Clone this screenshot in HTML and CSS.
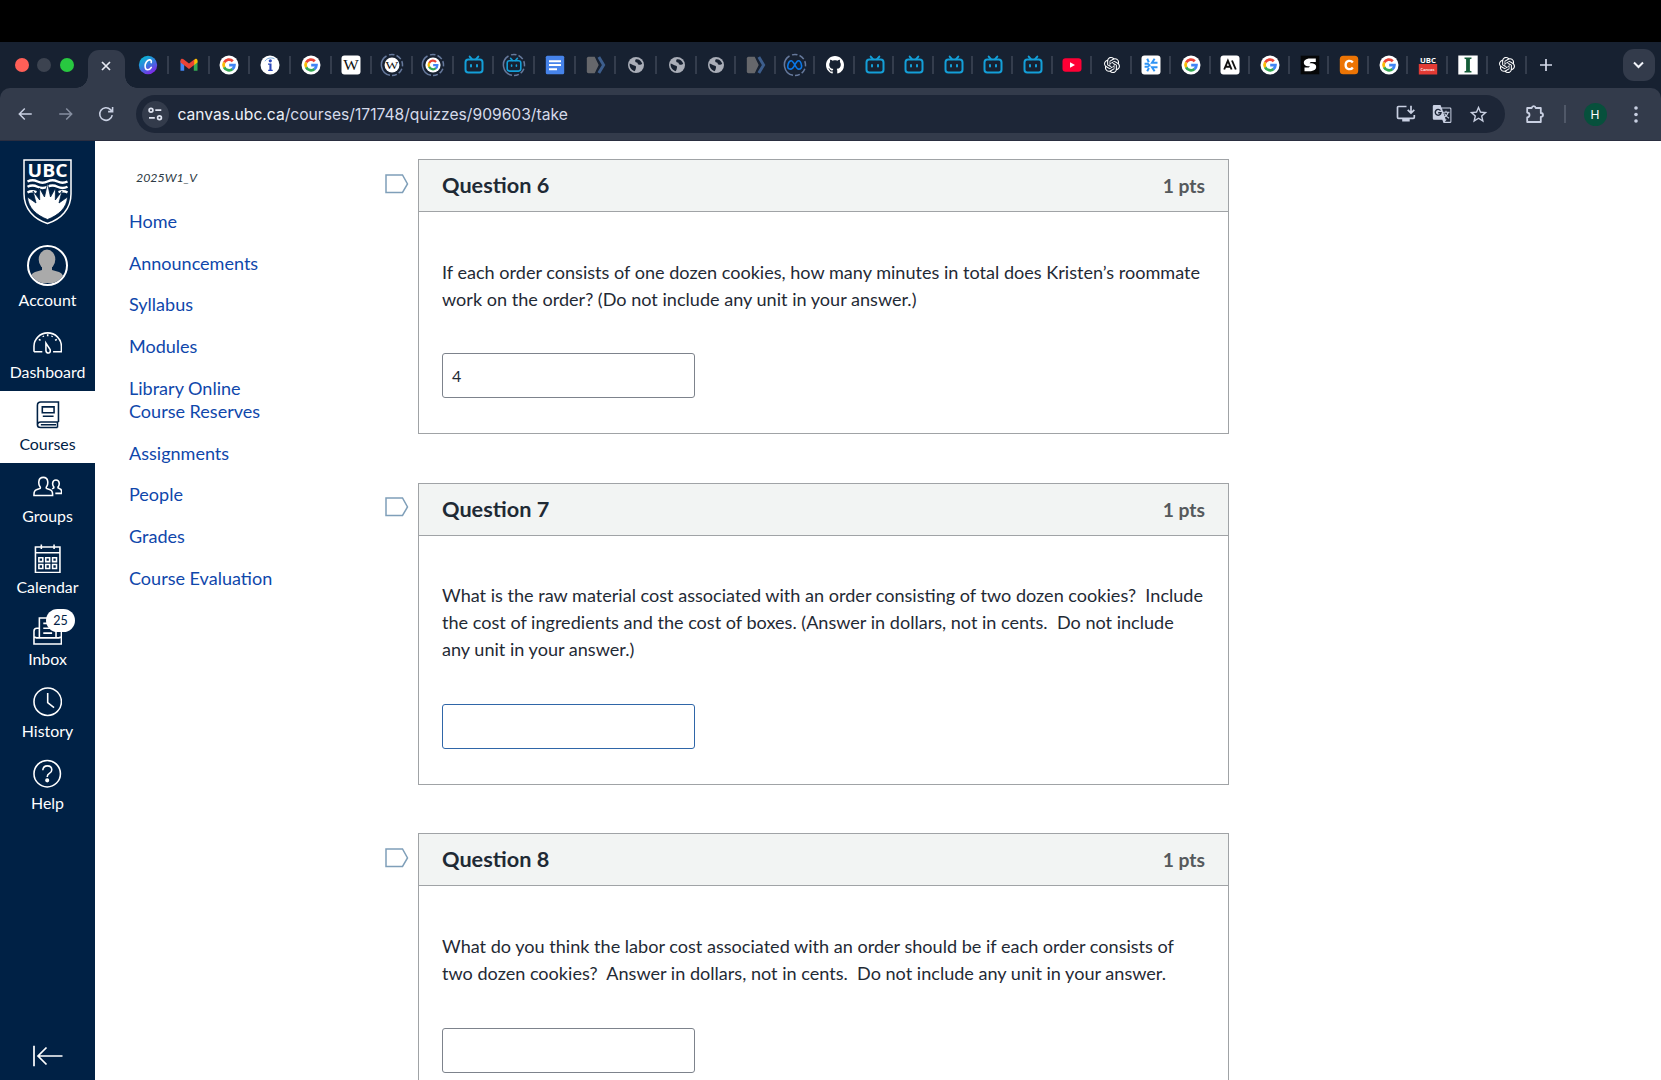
FILE: index.html
```html
<!DOCTYPE html>
<html lang="en">
<head>
<meta charset="utf-8">
<title>Quiz</title>
<link rel="stylesheet" href="styles.css">
</head>
<body>
<svg class="sprite" aria-hidden="true">
  <symbol id="ring" viewBox="0 0 24 24"><g fill="none" stroke="#66799c" stroke-width="1.500"><path d="M10 22.300A10.500 10.500 0 0 1 6.500 3"/><path d="M9 1.900a10.500 10.500 0 0 1 13.500 10.100A10.500 10.500 0 0 1 12 22.500" stroke-dasharray="5.500 2.200"/></g></symbol>
  <symbol id="gmail" viewBox="0 0 20 20">
    <path d="M1.500 5.500v10.300h3.700V8.500z" fill="#4285f4"/><path d="M18.500 5.500v10.300h-3.700V8.500z" fill="#34a853"/>
    <path d="M14.800 5.600v4.700l3.700-2.800V5.600c0-1.700-2-2.300-3-1.200z" fill="#fbbc04"/>
    <path d="M1.500 5.600c0-1.800 2-2.300 3-1.300l5.500 4.200 5.200-4v5.500L10 13.900 5.200 10.300 1.500 7.500z" fill="#ea4335"/>
  </symbol>
  <symbol id="google" viewBox="0 0 20 20">
    <circle cx="10" cy="10" r="9.500" fill="#fff"/>
    <g fill="none" stroke-width="2.800">
      <path d="M5.200 7.500A5.300 5.300 0 0 1 13.800 6.200" stroke="#ea4335"/>
      <path d="M5.300 12.500a5.300 5.300 0 0 1-.1-5.200" stroke="#fbbc05"/>
      <path d="M13.600 13.900a5.300 5.300 0 0 1-8.400-1.600" stroke="#34a853"/>
      <path d="M10.200 10.200h5.200a5.300 5.300 0 0 1-2 4" stroke="#4285f4"/>
    </g>
  </symbol>
  <symbol id="info" viewBox="0 0 20 20">
    <circle cx="10" cy="10" r="9.500" fill="#fff"/><circle cx="10.300" cy="5.800" r="1.600" fill="#2a47b8"/>
    <path d="M8 8.500h3.500v6.300h1.200v1.300H8.200v-1.300h1.200V9.800H8z" fill="#2a47b8"/><path d="M5 6.200C6.500 3.200 11 2 14.500 3.800" fill="none" stroke="#70a3d8"/>
  </symbol>
  <symbol id="wiki" viewBox="0 0 20 20"><rect x=".5" y=".5" width="19" height="19" rx="3" fill="#fff"/><text x="10" y="15" class="serif" font-size="14.500" text-anchor="middle" textLength="15.500" lengthAdjust="spacingAndGlyphs">W</text></symbol>
  <symbol id="wikiround" viewBox="0 0 20 20"><circle cx="10" cy="10" r="9.300" fill="#fff"/><text x="10" y="14.800" class="serif" font-size="14" text-anchor="middle" textLength="16" lengthAdjust="spacingAndGlyphs">W</text></symbol>
  <symbol id="bili" viewBox="0 0 20 20"><g fill="none" stroke="#149fd8" stroke-width="2" stroke-linecap="round"><rect x="1.500" y="4.600" width="17" height="13" rx="2.800"/><path d="M5.700 1.600l2.200 2.600M14.300 1.600l-2.200 2.600M7 10v1.500M13 10v1.500"/></g></symbol>
  <symbol id="docs" viewBox="0 0 20 20"><rect x=".8" y=".8" width="18.400" height="18.400" rx="1.500" fill="#4683ea"/><path d="M4 6.200h12M4 10h12M4 14.200h8" stroke="#fff" stroke-width="2"/></symbol>
  <symbol id="fwd2" viewBox="0 0 20 20"><path d="M2.500 1.800h6.200l4 8.200-4 8.200H2.500q-1.700 0-1.700-1.700v-13q0-1.700 1.700-1.700z" fill="#66676b"/><path d="M12.800 2l4.800 8-4.800 8" fill="none" stroke="#3c5d8c" stroke-width="3"/></symbol>
  <symbol id="globe" viewBox="0 0 20 20"><circle cx="10" cy="10" r="8" fill="#a9adb7"/><path d="M3.700 8.600c2 .3 2.600 1.800 4.400 1.800 1.500 0 2.300 1 1.900 2.200-.3 1-.1 1.900-1.300 3.600C5.500 15.500 3 12 3.700 8.600zM9.600 4.400c2.800-.7 5.800 1.400 6.600 4.300-1.200.8-2 1.500-3.700.9-1.100-.4-.4-1.900-1.800-2.100-1.400-.1-2.100-1.900-1.100-3.100z" fill="#172131"/></symbol>
  <symbol id="meta" viewBox="0 0 20 20"><path d="M2 14.600C-.2 13 1.500 4.600 5.200 4.600c3.600 0 5.600 10.600 9.400 10.600 2.500 0 4-1.500 3.600-4.500-.5-3.600-1.800-6.100-3.900-6.100-3.600 0-5.200 10.600-9.300 10.600-1.500 0-2.500-.2-3-.6z" fill="none" stroke="#0a78e8" stroke-width="2"/></symbol>
  <symbol id="github" viewBox="0 0 16 16"><path fill="#fff" d="M8 0C3.580 0 0 3.580 0 8c0 3.540 2.290 6.530 5.470 7.590.4.070.55-.17.55-.38 0-.19-.01-.82-.01-1.490-2.010.37-2.530-.49-2.690-.94-.09-.23-.48-.94-.82-1.130-.28-.15-.68-.52-.01-.53.63-.01 1.080.58 1.230.82.720 1.210 1.870.870 2.330.660.070-.52.280-.87.510-1.070-1.780-.2-3.640-.89-3.640-3.950 0-.87.310-1.590.820-2.150-.08-.2-.36-1.020.080-2.120 0 0 .670-.21 2.200.820.640-.18 1.320-.27 2-.27s1.360.090 2 .270c1.530-1.040 2.200-.82 2.200-.82.440 1.100.160 1.920.080 2.120.510.560.820 1.270.820 2.150 0 3.070-1.870 3.750-3.650 3.950.290.250.540.730.540 1.480 0 1.070-.01 1.930-.01 2.200 0 .210.150.460.550.380A8.010 8.010 0 0 0 16 8c0-4.420-3.580-8-8-8z"/></symbol>
  <symbol id="youtube" viewBox="0 0 20 20"><rect x=".5" y="3.300" width="19" height="13.500" rx="3.200" fill="#ff0035"/><path d="M8 7.200v5.600l5-2.800z" fill="#fff"/></symbol>
  <symbol id="openai" viewBox="-3 -3 30 30"><path fill="#fff" d="M22.2819 9.8211a5.9847 5.9847 0 0 0-.5157-4.9108 6.0462 6.0462 0 0 0-6.5098-2.9A6.0651 6.0651 0 0 0 4.9807 4.1818a5.9847 5.9847 0 0 0-3.9977 2.9 6.0462 6.0462 0 0 0 .7427 7.0966 5.98 5.98 0 0 0 .511 4.9107 6.051 6.051 0 0 0 6.5146 2.9001A5.9847 5.9847 0 0 0 13.2599 24a6.0557 6.0557 0 0 0 5.7718-4.2058 5.9894 5.9894 0 0 0 3.9977-2.9001 6.0557 6.0557 0 0 0-.7475-7.0729zm-9.022 12.6081a4.4755 4.4755 0 0 1-2.8764-1.0408l.1419-.0804 4.7783-2.7582a.7948.7948 0 0 0 .3927-.6813v-6.7369l2.02 1.1686a.071.071 0 0 1 .038.052v5.5826a4.504 4.504 0 0 1-4.4945 4.4944zm-9.6607-4.1254a4.4708 4.4708 0 0 1-.5346-3.0137l.142.0852 4.783 2.7582a.7712.7712 0 0 0 .7806 0l5.8428-3.3685v2.3324a.0804.0804 0 0 1-.0332.0615L9.74 19.9502a4.4992 4.4992 0 0 1-6.1408-1.6464zM2.3408 7.8956a4.485 4.485 0 0 1 2.3655-1.9728V11.6a.7664.7664 0 0 0 .3879.6765l5.8144 3.3543-2.0201 1.1685a.0757.0757 0 0 1-.071 0l-4.8303-2.7865A4.504 4.504 0 0 1 2.3408 7.872zm16.5963 3.8558L13.1038 8.364 15.1192 7.2a.0757.0757 0 0 1 .071 0l4.8303 2.7913a4.4944 4.4944 0 0 1-.6765 8.1042v-5.6772a.79.79 0 0 0-.407-.667zm2.0107-3.0231l-.142-.0852-4.7735-2.7818a.7759.7759 0 0 0-.7854 0L9.409 9.2297V6.8974a.0662.0662 0 0 1 .0284-.0615l4.8303-2.7866a4.4992 4.4992 0 0 1 6.6802 4.66zM8.3065 12.863l-2.02-1.1638a.0804.0804 0 0 1-.038-.0567V6.0742a4.4992 4.4992 0 0 1 7.3757-3.4537l-.142.0805L8.704 5.459a.7948.7948 0 0 0-.3927.6813zm1.0976-2.3654l2.602-1.4998 2.6069 1.4998v2.9994l-2.5974 1.4997-2.6067-1.4997Z"/></symbol>
  <symbol id="spark" viewBox="0 0 20 20"><rect x=".5" y=".5" width="19" height="19" rx="3" fill="#fff"/><g fill="none" stroke="#2f94f5" stroke-width="2"><path d="M6.200 3.800l1.600 3.400M3.600 8.700h3.200l1.600 1.600-1.600 1.500H3.600M6.200 16.300l1.700-3.300M13.600 3.800l-2.600 4h5.500M16.500 12.300H11l2.600 4"/></g></symbol>
  <symbol id="anthropic" viewBox="0 0 20 20"><rect x=".5" y=".5" width="19" height="19" rx="3" fill="#fff"/><path d="M4.200 14.500L7.900 5.600l3.700 8.900M5.500 11.700h4.700M12 5.500l3.800 9" fill="none" stroke="#111" stroke-width="1.900"/></symbol>
  <symbol id="sblack" viewBox="0 0 20 20"><rect x=".7" y=".7" width="18.600" height="18.600" fill="#060708"/><path d="M15.800 3.500H8.500Q3.500 4.500 3.800 8q.4 3 4.200 3.200h2l-1.300 1.300H4.500v3.700h6.500q5.200-.9 5.200-4.200 0-3.200-4.200-3.800H9.500l1.300-1.300h5z" fill="#fff"/></symbol>
  <symbol id="corange" viewBox="0 0 20 20"><rect x=".8" y=".8" width="18.400" height="18.400" rx="3.500" fill="#ec7404"/><path d="M13.800 7.500C12 4.800 6.600 5.200 6.600 10s5.400 5.200 7.200 2.500" fill="none" stroke="#fff" stroke-width="2.300"/></symbol>
  <symbol id="ubcfav" viewBox="0 0 20 20"><rect x=".8" y="9" width="18.400" height="10.500" fill="#e23a34"/><text x="10" y="7.500" fill="#fff" class="sans" font-weight="700" font-size="7" text-anchor="middle" textLength="16" lengthAdjust="spacingAndGlyphs">UBC</text><text x="9.500" y="15.500" fill="#fff" class="sans" font-weight="600" font-size="4" text-anchor="middle">Canvas</text></symbol>
  <symbol id="inst" viewBox="0 0 20 20"><rect x=".3" y=".5" width="19.400" height="19" fill="#fff"/><path d="M6.500 2.500h7v1.300l-1.600.5v11.400l1.600.5v1.300h-7v-1.300l1.600-.5V4.300l-1.600-.5z" fill="#145c38"/></symbol>
</svg>

<div class="topgap"></div>
<header class="tabstrip">
  <div class="lights"><i class="red"></i><i class="gray"></i><i class="green"></i></div>
  <div class="active-tab">
    <svg width="10" height="10" viewBox="0 0 10 10"><path d="M1 1l8 8M9 1L1 9" stroke="#e6e9f2" stroke-width="1.700"/></svg>
  </div>
  <div class="tabs">
    <span class="tab"><svg viewBox="0 0 20 20">
      <linearGradient id="cg" x1="0" y1="0" x2=".6" y2="1"><stop offset="0" stop-color="#00c4cc"/><stop offset=".5" stop-color="#2b86dc"/><stop offset="1" stop-color="#7d2ae8"/></linearGradient>
      <circle cx="10" cy="10" r="9.200" fill="url(#cg)"/>
      <path d="M13.200 7.600c.5-1.700-.3-2.900-1.800-2.700-2.300.3-4.300 3.300-4.300 6.200 0 2.300 1 3.700 2.700 3.700 1.500 0 2.700-1 3.500-2.400" fill="none" stroke="#fff" stroke-width="1.600" stroke-linecap="round"/></svg></span>
    <span class="tab"><svg><use href="#gmail"/></svg></span>
    <span class="tab"><svg><use href="#google"/></svg></span>
    <span class="tab"><svg><use href="#info"/></svg></span>
    <span class="tab"><svg><use href="#google"/></svg></span>
    <span class="tab"><svg><use href="#wiki"/></svg></span>
    <span class="tab asleep"><svg><use href="#wikiround"/></svg><svg class="ring"><use href="#ring"/></svg></span>
    <span class="tab asleep"><svg><use href="#google"/></svg><svg class="ring"><use href="#ring"/></svg></span>
    <span class="tab"><svg><use href="#bili"/></svg></span>
    <span class="tab asleep"><svg><use href="#bili"/></svg><svg class="ring"><use href="#ring"/></svg></span>
    <span class="tab"><svg><use href="#docs"/></svg></span>
    <span class="tab"><svg><use href="#fwd2"/></svg></span>
    <span class="tab"><svg><use href="#globe"/></svg></span>
    <span class="tab narrow"><svg><use href="#globe"/></svg></span>
    <span class="tab narrow"><svg><use href="#globe"/></svg></span>
    <span class="tab narrow"><svg><use href="#fwd2"/></svg></span>
    <span class="tab narrow asleep"><svg><use href="#meta"/></svg><svg class="ring"><use href="#ring"/></svg></span>
    <span class="tab narrow"><svg class="gh"><use href="#github"/></svg></span>
    <span class="tab narrow"><svg><use href="#bili"/></svg></span>
    <span class="tab narrow"><svg><use href="#bili"/></svg></span>
    <span class="tab narrow"><svg><use href="#bili"/></svg></span>
    <span class="tab narrow"><svg><use href="#bili"/></svg></span>
    <span class="tab narrow"><svg><use href="#bili"/></svg></span>
    <span class="tab narrow"><svg><use href="#youtube"/></svg></span>
    <span class="tab narrow"><svg><use href="#openai"/></svg></span>
    <span class="tab narrow"><svg><use href="#spark"/></svg></span>
    <span class="tab narrow"><svg><use href="#google"/></svg></span>
    <span class="tab narrow"><svg><use href="#anthropic"/></svg></span>
    <span class="tab narrow"><svg><use href="#google"/></svg></span>
    <span class="tab narrow"><svg><use href="#sblack"/></svg></span>
    <span class="tab narrow"><svg><use href="#corange"/></svg></span>
    <span class="tab narrow"><svg><use href="#google"/></svg></span>
    <span class="tab narrow"><svg><use href="#ubcfav"/></svg></span>
    <span class="tab narrow"><svg><use href="#inst"/></svg></span>
    <span class="tab narrow"><svg><use href="#openai"/></svg></span>
  </div>
  <svg class="plus" width="12" height="12" viewBox="0 0 12 12"><path d="M6 0v12M0 6h12" stroke="#d5daea" stroke-width="1.700"/></svg>
  <div class="tabsearch"><svg width="11" height="8" viewBox="0 0 11 8"><path d="M1 1.500l4.500 4.500L10 1.500" fill="none" stroke="#f2f4fa" stroke-width="2"/></svg></div>
</header>

<div class="toolbar-back">
<div class="toolbar">
  <div class="nav-buttons">
    <svg viewBox="0 0 24 24" fill="#c9d0e2"><path d="M21 11H6.800l5.600-5.600L11 4l-8 8 8 8 1.400-1.400L6.800 13H21z"/></svg>
    <svg viewBox="0 0 24 24" fill="#878fa1"><path d="M3 11h14.200l-5.600-5.600L13 4l8 8-8 8-1.400-1.400 5.600-5.600H3z"/></svg>
    <svg viewBox="0 0 24 24"><path d="M20.300 13.500a8.400 8.400 0 1 1-2.300-7.400L20 8.500M20.800 2.800v6h-6" fill="none" stroke="#c9d0e2" stroke-width="2.100"/></svg>
  </div>
  <div class="omnibox">
    <span class="site"><svg width="15" height="14" viewBox="0 0 15 14" fill="none" stroke="#dfe4f0" stroke-width="1.700"><circle cx="3" cy="3.200" r="1.900"/><path d="M7.300 3.200h6M1 10.800h5.800"/><circle cx="11.500" cy="10.800" r="1.900"/></svg></span>
    <span class="url"><b>canvas.ubc.ca</b>/courses/171748/quizzes/909603/take</span>
    <span class="omni-icons">
      <svg width="20" height="18" viewBox="0 0 20 18"><path d="M10.500 1.500H2.500q-1 0-1 1v9.800q0 1 1 1h14.800q1 0 1-1V10" fill="none" stroke="#c9d0e2" stroke-width="1.700"/><path d="M6.200 13.500h7.500v3H6.200z" fill="#c9d0e2"/><path d="M15 .8v7M11.700 4.800l3.300 3.300 3.300-3.300" fill="none" stroke="#c9d0e2" stroke-width="1.700"/></svg>
      <svg width="20" height="20" viewBox="0 0 20 20"><path d="M2 1h6.500l1 2.500H18q1.400 0 1.400 1.300v12.900q0 1.300-1.400 1.300h-6.500l-1.200-3.200H2Q.8 15.800.8 14.500V2.300Q.8 1 2 1z" fill="#c9d0e2"/><path d="M10 4.600h7.800q.6 0 .6.600v12q0 .6-.6.600h-5l2-2.200h-1.100z" fill="#1d2637"/><path d="M11 8.200h6.500M14 6.700v1.500M16.200 8.500q-.8 2.800-4 4.800M12.500 9.500q1 2.500 4.500 4.700" fill="none" stroke="#c9d0e2" stroke-width="1.100"/><path d="M8.500 6.600A2.900 2.900 0 1 0 9 8.800H6.200" fill="none" stroke="#1d2637" stroke-width="1.400"/></svg>
      <svg width="21" height="21" viewBox="0 0 24 24" fill="#c9d0e2"><path d="M22 9.240l-7.190-.62L12 2 9.190 8.630 2 9.240l5.460 4.730L5.820 21 12 17.270 18.180 21l-1.630-7.030L22 9.240zM12 15.400l-3.760 2.270 1-4.280-3.320-2.880 4.380-.38L12 6.100l1.710 4.040 4.380.38-3.320 2.880 1 4.280L12 15.400z"/></svg>
    </span>
  </div>
  <svg class="puzzle" width="20" height="20" viewBox="0 0 20 20"><path d="M2.200 4h4.600Q7 2.200 8.700 2.200T10.600 4h5.200v5q2.200.2 2.200 2t-2.200 2v5H2.200v-4.500q2.300-.4 2.300-2.500T2.200 8.500z" fill="none" stroke="#c9d0e2" stroke-width="1.800" stroke-linejoin="round"/></svg>
  <i class="bar"></i>
  <span class="profile">H</span>
  <svg class="dots" width="4" height="17" viewBox="0 0 4 17" fill="#c9d0e2"><circle cx="2" cy="2" r="1.800"/><circle cx="2" cy="8.500" r="1.800"/><circle cx="2" cy="15" r="1.800"/></svg>
</div>
</div>

<div class="page">
  <nav class="global">
    <svg class="crest" width="49" height="66" viewBox="0 0 49 66">
      <path d="M1 1h47v34c0 15-10 25-23.500 29.500C11 60 1 50 1 35z" fill="#002145" stroke="#fff" stroke-width="1.500"/>
      <text x="24.500" y="18.300" class="sans" font-weight="700" font-size="18" fill="#fff" text-anchor="middle" textLength="40" lengthAdjust="spacingAndGlyphs">UBC</text>
      <g fill="none" stroke="#fff" stroke-width="2.400"><path d="M4.500 22.500q5-2.500 10 0t10 0 10 0 10 0M4.500 27.800q5-2.500 10 0t10 0 10 0 10 0"/><path d="M4.500 33.500q4-2.200 9-.3M44.500 33.500q-4-2.200-9-.3"/></g>
      <path d="M24.500 24l3 14 5-9-.2 12 6.700-9-3 12 8.500-6C44 49 35 56.500 24.500 60.500 14 56.500 5 49 4.500 38l8.500 6-3-12 6.700 9-.2-12 5 9z" fill="#fff" stroke="#002145" stroke-width=".8"/>
    </svg>
    <a class="item account"><span class="avatar"><svg width="36" height="36" viewBox="0 0 36 36"><g fill="#aaa"><ellipse cx="18" cy="12.500" rx="8.300" ry="10"/><path d="M13 19h10v4l7 2q5 1.800 6 11H0q1-9.200 6-11l7-2z"/></g></svg></span><b>Account</b></a>
    <a class="item"><svg class="ic" viewBox="0 0 30 30"><path d="M1 24.200v-5.500a14 13.700 0 0 1 28 0v5.500h-8.500M1 24.200h8.500"/><path d="M13.200 15.500l4.300 6.500q.7 3-1.500 3.500-2.400.3-2.800-2.500z"/><path d="M15 6.500v2M6 11.500l1.700 1.200M24.300 11.500l-1.700 1.200M10.300 8l.5 1M19.700 8l-.5 1"/></svg><b>Dashboard</b></a>
    <a class="item current"><svg class="ic" viewBox="0 0 30 30"><path d="M26 22.500V2H8Q4.500 2 4.500 5.500V25.200q0 2.800 3.200 2.800H25M26 22.500H8q-3.300 0-3.300 2.500M25 22.500V28M8 25.300h15.500M9.500 7h12v6h-12zM10 16.500h11"/></svg><b>Courses</b></a>
    <a class="item low"><svg class="ic" viewBox="0 0 30 30"><path d="M1 24q-.2-5 2.500-5.800l3.800-1.400q.6-1.200-.4-2.300-1.300-2-.9-5Q6.500 5.500 10.500 5.500T15 9.500q.4 3-.9 5-1 1.100-.4 2.300l3.800 1.400Q20.200 19 20 24z"/><path d="M19.500 17.200l1.700-.9q.3-.8-.4-1.700-1-1.500-.7-3.500.4-3 3.300-3t3.300 3q.3 2-.7 3.500-.7.900-.4 1.700l2.200 1Q29.500 18 29.300 21.800h-6.500"/></svg><b>Groups</b></a>
    <a class="item low"><svg class="ic" viewBox="0 0 30 30"><path d="M2.500 3h25v26h-25zM2.500 9h25M8.500.5V5M21.500.5V5M6 14h4v4H6zM13 14h4v4h-4zM20 14h4v4h-4zM6 21h4v4H6zM13 21h4v4h-4zM20 21h4v4h-4z"/></svg><b>Calendar</b></a>
    <a class="item low"><svg class="ic" viewBox="0 0 30 30"><path d="M6.500 22V2h17v20M6.500 12.500H4q-3 0-3 3V28.500h28V15q0-2.500-3-2.500h-2.500M1.500 21.500l2 .8h23l2-.8M10.500 7.500h5M10.500 12.500h9M10.500 17.500h9"/></svg><b>Inbox</b><em class="badge">25</em></a>
    <a class="item low"><svg class="ic" viewBox="0 0 30 30"><circle cx="15" cy="15" r="14"/><path d="M15 6v10l6.500 5"/></svg><b>History</b></a>
    <a class="item low"><svg class="ic" viewBox="0 0 30 30"><circle cx="14.500" cy="15" r="13.500"/><path d="M10 11.500q.3-4.500 4.700-4.500t4.500 4q0 2.300-2.500 3.700-2.200 1.300-2.200 3.800"/><circle cx="14.500" cy="21.800" r="1.300" fill="#fff"/></svg><b>Help</b></a>
    <svg class="collapse" width="30" height="22" viewBox="0 0 30 22"><path d="M1 .8v20.400M29.500 11H5.500M13.500 2.500L5 11l8.500 8.500" fill="none" stroke="#fff" stroke-width="1.700"/></svg>
  </nav>
  <aside class="course-nav">
    <span class="term">2025W1_V</span>
    <a>Home</a><a>Announcements</a><a>Syllabus</a><a>Modules</a><a>Library Online Course Reserves</a><a>Assignments</a><a>People</a><a>Grades</a><a>Course Evaluation</a>
  </aside>
  <main class="quiz">
    <section class="row">
      <svg class="flag" width="24" height="20" viewBox="0 0 24 20"><path d="M1 1h16.500l5 9-5 8.500H1z"/></svg>
      <div class="question">
        <h2>Question 6 <span>1 pts</span></h2>
        <div class="body"><p>If each order consists of one dozen cookies, how many minutes in total does Kristen’s roommate<br>work on the order? (Do not include any unit in your answer.)</p><div class="answer">4</div></div>
      </div>
    </section>
    <section class="row">
      <svg class="flag" width="24" height="20" viewBox="0 0 24 20"><path d="M1 1h16.500l5 9-5 8.500H1z"/></svg>
      <div class="question">
        <h2>Question 7 <span>1 pts</span></h2>
        <div class="body"><p>What is the raw material cost associated with an order consisting of two dozen cookies?&nbsp; Include<br>the cost of ingredients and the cost of boxes. (Answer in dollars, not in cents.&nbsp; Do not include<br>any unit in your answer.)</p><div class="answer focused"></div></div>
      </div>
    </section>
    <section class="row">
      <svg class="flag" width="24" height="20" viewBox="0 0 24 20"><path d="M1 1h16.500l5 9-5 8.500H1z"/></svg>
      <div class="question">
        <h2>Question 8 <span>1 pts</span></h2>
        <div class="body"><p>What do you think the labor cost associated with an order should be if each order consists of<br>two dozen cookies?&nbsp; Answer in dollars, not in cents.&nbsp; Do not include any unit in your answer.</p><div class="answer"></div></div>
      </div>
    </section>
  </main>
</div>
</body>
</html>
```
FILE: styles.css
```css
* { box-sizing: border-box; }
body {
  margin: 0;
  width: 1661px;
  height: 1080px;
  overflow: hidden;
  display: flex;
  flex-direction: column;
  background: #fff;
  font-family: Lato, "Liberation Sans", sans-serif;
  color: #1f2a35;
}
svg { display: block; flex: none; }
.sprite { display: none; }
.serif { font-family: "Liberation Serif", serif; fill: #111; }
.sans { font-family: "Open Sans", sans-serif; }

/* Browser frame */
.topgap { height: 42px; flex: none; background: #000; }
.tabstrip {
  height: 46px;
  flex: none;
  display: flex;
  background: #172131;
  align-items: center;
}
.lights { display: flex; gap: 8.500px; width: 88px; padding-left: 14.500px; flex: none; }
.lights i { width: 14px; height: 14px; border-radius: 50%; }
.red { background: #ff5f57; }
.gray { background: #3c4350; }
.green { background: #28c840; }
.active-tab {
  position: relative;
  width: 37px;
  height: 38px;
  flex: none;
  align-self: flex-end;
  background: #333b4b;
  border-radius: 11px 11px 0 0;
  padding: 11px 0 0 13px;
}
.active-tab::before, .active-tab::after {
  content: "";
  position: absolute;
  bottom: 0;
  width: 12px;
  height: 12px;
}
.active-tab::before { left: -12px; background: radial-gradient(circle at 0 0, transparent 11.500px, #333b4b 12px); }
.active-tab::after { right: -12px; background: radial-gradient(circle at 100% 0, transparent 11.500px, #333b4b 12px); }
.tabs { display: flex; padding-left: 3.300px; height: 18px; margin-top: 0.500px; flex: none; }
.tab {
  position: relative;
  width: 40.680px;
  flex: none;
  display: flex;
  align-items: center;
  justify-content: center;
  border-right: 2px solid #343d4d;
  padding-left: 1px;
}
.tab.narrow { width: 39.560px; padding-left: 2px; }
.tab svg { width: 20px; height: 20px; }
.tab .gh { width: 18px; height: 18px; }
.asleep svg { width: 16px; height: 16px; }
.tab .ring {
  position: absolute;
  left: calc(50% - 11.500px);
  top: -3px;
  width: 24px;
  height: 24px;
}
.plus { margin-left: 12.500px; }
.tabsearch {
  width: 32px;
  height: 32px;
  margin: 0 6.500px 0 auto;
  border-radius: 11px;
  background: #333b4b;
  display: flex;
  align-items: center;
  justify-content: center;
}
.toolbar-back { background: #172131; flex: none; }
.toolbar {
  height: 53px;
  display: flex;
  align-items: center;
  background: #333b4b;
  border-radius: 10px 10px 0 0;
  border-bottom: 1px solid #2a2e40;
}
.nav-buttons { display: flex; gap: 22.500px; width: 136px; padding-left: 16px; flex: none; }
.nav-buttons svg { width: 18px; height: 18px; }
.omnibox {
  width: 1369px;
  height: 38px;
  border-radius: 19px;
  background: #1d2637;
  display: flex;
  align-items: center;
  flex: none;
}
.site {
  width: 27px;
  height: 27px;
  margin-left: 5.500px;
  border-radius: 50%;
  background: #333b4b;
  display: flex;
  align-items: center;
  justify-content: center;
}
.url { margin-left: 9px; font: 15.630px Inter, sans-serif; color: #d5daea; white-space: nowrap; }
.url b { font-weight: 400; color: #eef1f8; }
.omni-icons { display: flex; align-items: center; gap: 16px; margin: 0 16.500px 0 auto; }
.puzzle { margin-left: 19.500px; }
.bar { width: 1.500px; height: 18px; margin-left: 19.500px; background: #505868; }
.profile {
  width: 23px;
  height: 23px;
  margin-left: 18px;
  border-radius: 50%;
  background: #07503c;
  color: #fff;
  font: 12px/23px Inter, sans-serif;
  text-align: center;
}
.dots { margin-left: 27px; }

/* Page */
.page { flex: 1; min-height: 0; display: flex; }
.global {
  width: 95px;
  flex: none;
  background: #002145;
  display: flex;
  flex-direction: column;
  align-items: center;
  color: #fff;
}
.crest { margin-top: 18px; }
.item {
  position: relative;
  width: 95px;
  height: 71.750px;
  flex: none;
  padding-top: 8.500px;
  display: flex;
  flex-direction: column;
  align-items: center;
}
.item b { font-weight: 400; font-size: 15.900px; line-height: 20px; margin-top: 5px; }
.item.low { padding-top: 9.200px; }
.item.low b { margin-top: 4px; }
.item.account { height: 94.500px; padding-top: 20px; }
.item.account b { margin-top: 4px; }
.avatar { width: 41px; height: 41px; border: 2.500px solid #fff; border-radius: 50%; overflow: hidden; }
.ic { width: 29.400px; height: 29.400px; fill: none; stroke: currentColor; stroke-width: 1.600; }
.current { background: #fff; color: #002145; }
.badge {
  position: absolute;
  left: 46px;
  top: 2.500px;
  width: 29px;
  height: 23px;
  border-radius: 12px;
  background: #fff;
  color: #002145;
  font-style: normal;
  font-size: 12.500px;
  line-height: 23px;
  text-align: center;
}
.collapse { margin: auto 0 13px; }
.course-nav { width: 290px; flex: none; padding: 26px 100px 0 34px; display: flex; flex-direction: column; }
.term { font-size: 12.400px; line-height: 22px; font-style: italic; padding-left: 7px; margin-bottom: 12.300px; color: #2d3b45; }
.course-nav a { width: 150px; font-size: 18.050px; line-height: 23.600px; padding: 9px 0; color: #0f47ab; }
.quiz { width: 844px; flex: none; padding-top: 18px; display: flex; flex-direction: column; gap: 48.400px; }
.row { display: flex; flex: none; }
.flag { margin: 14.500px 9px 0 0; fill: #fff; stroke: #7f9fb9; stroke-width: 1.500; }
.question { flex: 1; border: 1px solid #a0a3a6; }
.question h2 {
  margin: 0;
  height: 52px;
  padding: 0 23px 1px;
  display: flex;
  align-items: center;
  justify-content: space-between;
  background: #f2f4f3;
  border-bottom: 1px solid #a0a3a6;
  font-size: 21.700px;
  font-weight: 700;
}
.question h2 span { font-size: 19.300px; color: #55595c; padding-top: 1px; }
.body { padding: 46.500px 0 35px 23px; }
.body p { margin: 0 0 40.600px; font-size: 18.080px; line-height: 27.100px; white-space: nowrap; }
.answer {
  width: 253px;
  height: 45px;
  border: 1px solid #7d838c;
  border-radius: 3px;
  padding-left: 9px;
  font-size: 16px;
  line-height: 44px;
}
.focused { border-color: #2f66a8; }
```
